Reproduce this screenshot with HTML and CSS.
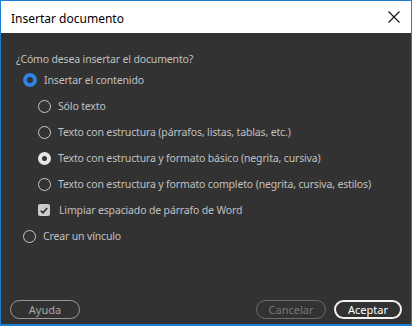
FILE: index.html
```html
<!DOCTYPE html>
<html lang="es">
<head>
<meta charset="utf-8">
<title>Insertar documento</title>
<link rel="stylesheet" href="styles.css">
</head>
<body>
<div class="window">
  <div class="titlebar">
    <span class="title">Insertar documento</span>
    <svg class="close" width="12" height="12" viewBox="0 0 12 12"><path d="M0.5 0.5 L11.5 11.5 M11.5 0.5 L0.5 11.5" stroke="#111" stroke-width="1.1" fill="none"/></svg>
  </div>
  <div class="content">
    <div class="question">¿Cómo desea insertar el documento?</div>
    <div class="options">
      <div class="row"><span class="radio radio-primary"></span><span class="label">Insertar el contenido</span></div>
      <div class="row sub"><span class="radio"></span><span class="label">Sólo texto</span></div>
      <div class="row sub"><span class="radio"></span><span class="label">Texto con estructura (párrafos, listas, tablas, etc.)</span></div>
      <div class="row sub"><span class="radio radio-checked"></span><span class="label">Texto con estructura y formato básico (negrita, cursiva)</span></div>
      <div class="row sub"><span class="radio"></span><span class="label">Texto con estructura y formato completo (negrita, cursiva, estilos)</span></div>
      <div class="row sub"><span class="checkbox"><svg width="8" height="7" viewBox="0 0 8 7"><path d="M0.8 3.6 L3 5.8 L7.2 1" stroke="#2b2b2b" stroke-width="1.6" fill="none"/></svg></span><span class="label check-label">Limpiar espaciado de párrafo de Word</span></div>
      <div class="row"><span class="radio"></span><span class="label">Crear un vínculo</span></div>
    </div>
    <div class="footer">
      <button class="btn">Ayuda</button>
      <div class="spacer"></div>
      <button class="btn btn-disabled">Cancelar</button>
      <button class="btn btn-primary">Aceptar</button>
    </div>
  </div>
</div>
</body>
</html>
```

FILE: styles.css
```css
* { box-sizing: border-box; }
html, body { margin: 0; padding: 0; }
body {
  width: 412px;
  height: 326px;
  font-family: "Noto Sans", "Open Sans", sans-serif;
  overflow: hidden;
}
.window {
  width: 412px;
  height: 326px;
  border: 1px solid #1c7fd6;
  border-bottom-width: 2px;
  display: flex;
  flex-direction: column;
  background: #323232;
}
.titlebar {
  height: 32px;
  background: #ffffff;
  display: flex;
  align-items: center;
  padding: 0 11px 0 10px;
  flex-shrink: 0;
}
.title {
  font-size: 12px;
  color: #000;
  flex: 1;
  position: relative;
  top: 1px;
}
.close { display: block; }
.content {
  flex: 1;
  display: flex;
  flex-direction: column;
  padding: 18px 0 0 15px;
  color: #c0c0c0;
  font-size: 10.5px;
  letter-spacing: -0.15px;
}
.question {
  height: 16px;
  line-height: 16px;
}
.options {
  display: flex;
  flex-direction: column;
}
.row {
  height: 26px;
  display: flex;
  align-items: center;
  padding-left: 7px;
}
.row.sub { padding-left: 22px; }
.label { margin-left: 7px; line-height: 16px; }
.check-label { margin-left: 9px; }
.radio {
  width: 13px;
  height: 13px;
  border-radius: 50%;
  border: 1.2px solid #c8c8c8;
  flex-shrink: 0;
}
.radio-primary {
  border: 4px solid #2d83e2;
  width: 14px;
  height: 14px;
  background: #323232;
}
.radio-checked {
  border: 4px solid #e6e6e6;
  width: 13px;
  height: 13px;
  background: #323232;
}
.checkbox {
  width: 12px;
  height: 12px;
  border-radius: 2px;
  background: #cccccc;
  display: flex;
  align-items: center;
  justify-content: center;
  flex-shrink: 0;
}
.checkbox svg { display: block; }
.footer {
  margin-top: auto;
  display: flex;
  align-items: center;
  gap: 8px;
  margin-left: -6px;
  padding: 0 9px 5px 0;
  letter-spacing: 0;
}
.spacer { flex: 1; }
.btn {
  font-family: inherit;
  font-size: 11px;
  height: 19px;
  width: 70px;
  border-radius: 10px;
  background: transparent;
  border: 1.5px solid #9a9a9a;
  color: #a8a8a8;
  padding: 0;
  line-height: 15px;
}
.btn-disabled {
  border-color: #6c6c6c;
  color: #777777;
}
.btn-primary {
  width: 68px;
  border: 2px solid #f0f0f0;
  color: #ffffff;
}
```
